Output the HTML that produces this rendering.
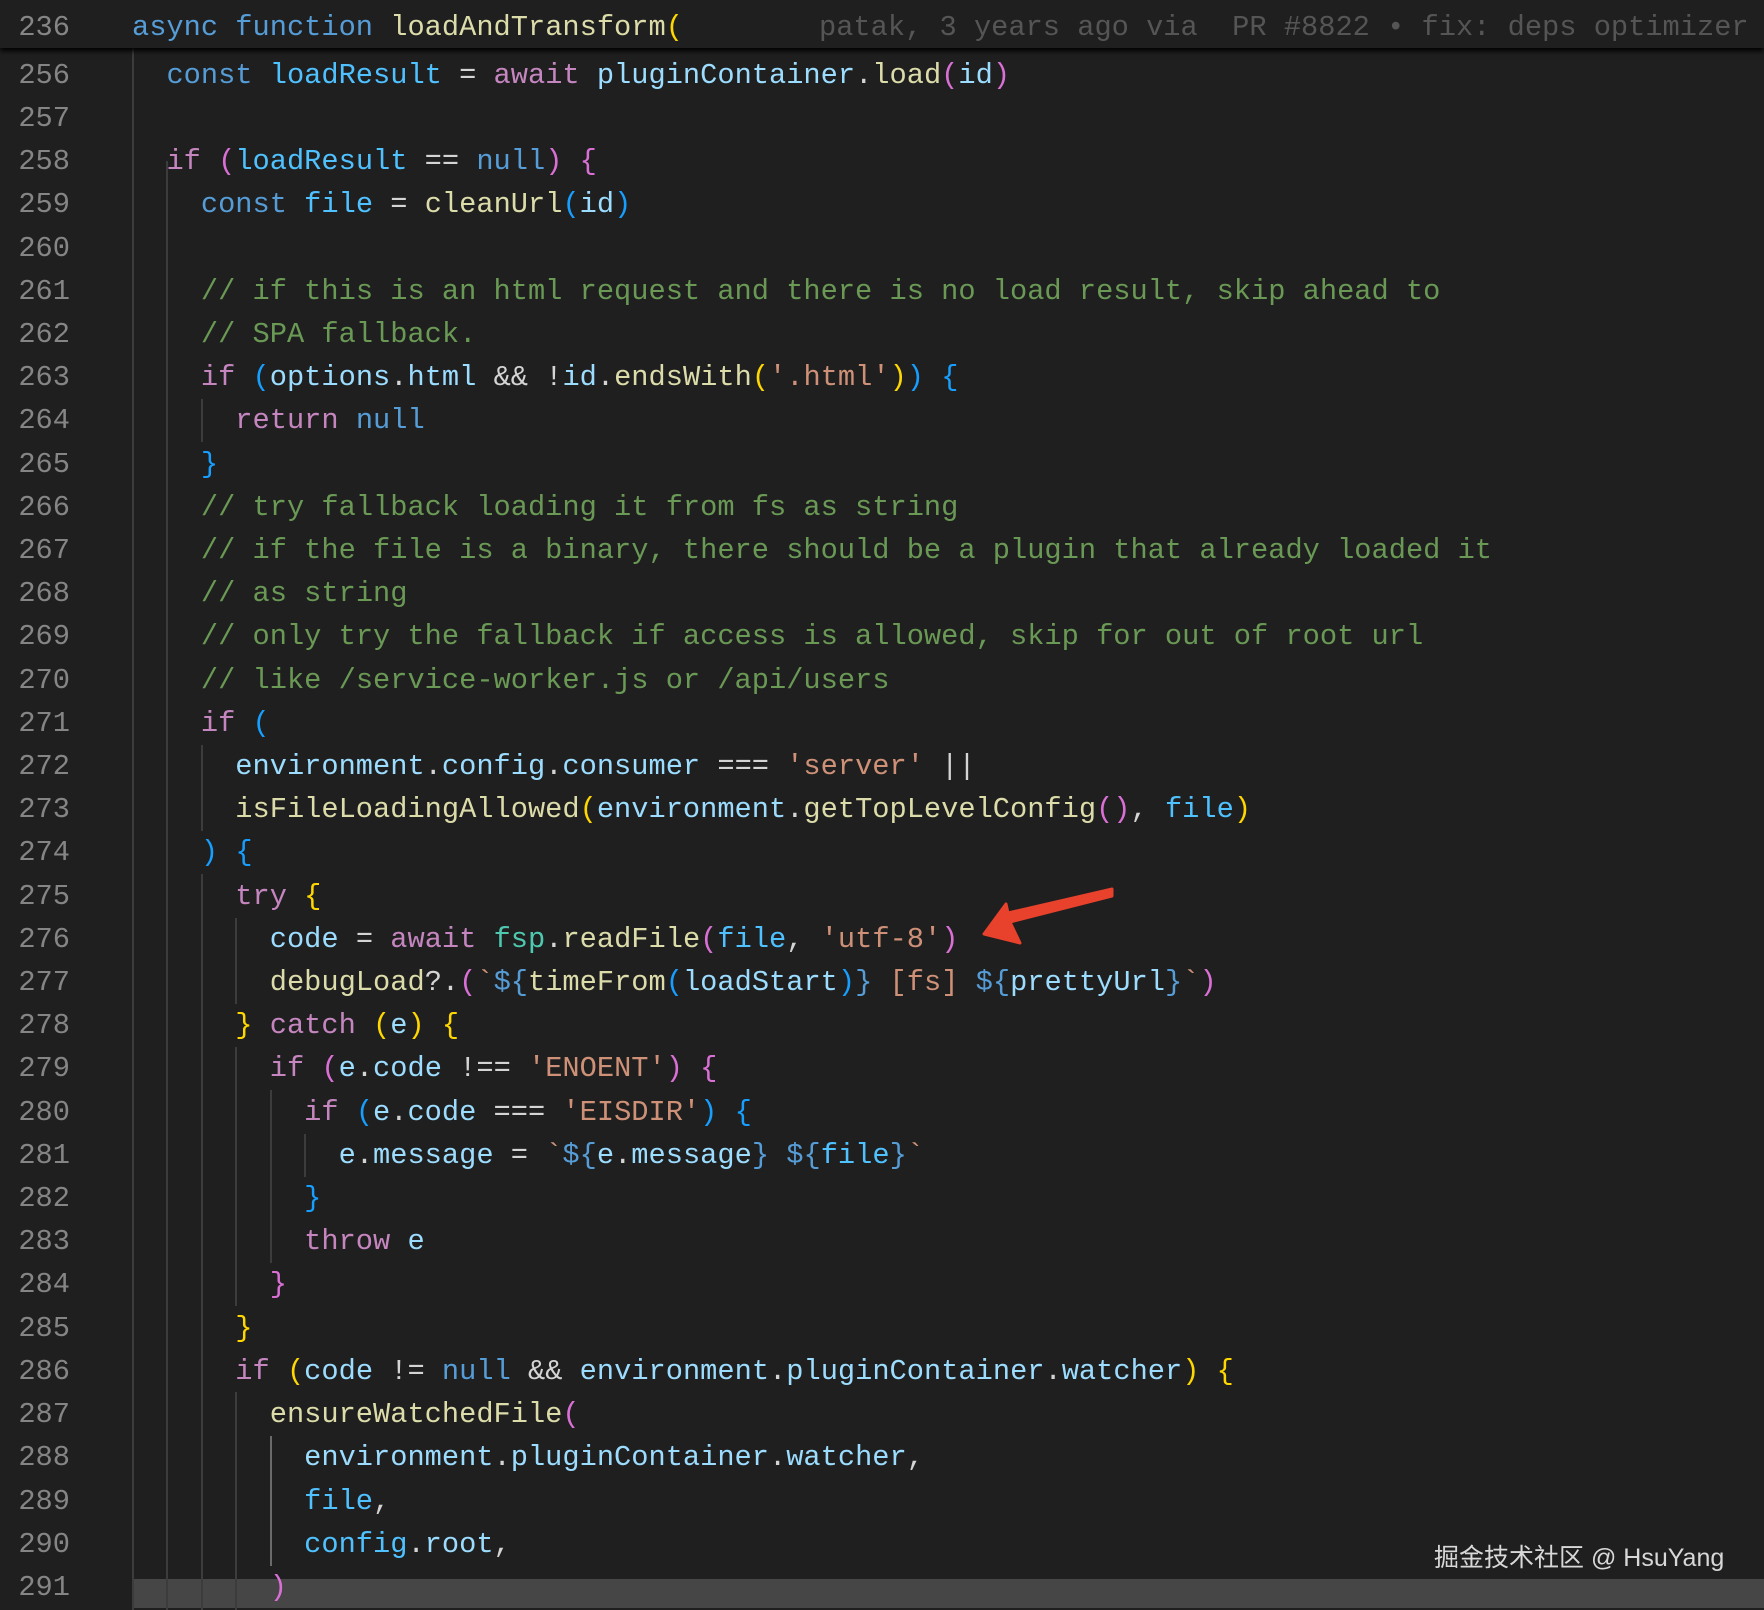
<!DOCTYPE html>
<html><head><meta charset="utf-8"><style>
html,body{margin:0;padding:0;background:#1f1f1f;width:1764px;height:1610px;overflow:hidden}
body{position:relative;font-family:"Liberation Mono",monospace;font-size:28.7px}
.hdr{position:absolute;left:0;top:0;width:1764px;height:48px;background:#1f1f1f;box-shadow:0 3px 5px #000;z-index:5}
.ln{position:absolute;left:0;width:70px;text-align:right;color:#858585;white-space:pre}
.code{position:absolute;left:132px;white-space:pre;color:#d4d4d4}
.row{height:43.2px;line-height:43.2px}
.g{position:absolute;width:2px;background:#3c3c3c}
.k{color:#569cd6}.c{color:#c586c0}.f{color:#dcdcaa}.v{color:#9cdcfe}.b{color:#4fc1ff}.s{color:#ce9178}.m{color:#6a9955}.t{color:#4ec9b0}
.y{color:#ffd700}.p{color:#da70d6}.u{color:#179fff}
</style></head><body>
<div class="hdr">
<div class="ln row" style="top:6px">236</div>
<div class="code row" style="top:6px"><span class="k">async</span> <span class="k">function</span> <span class="f">loadAndTransform</span><span class="y">(</span></div>
<div style="position:absolute;left:819px;top:6px;line-height:43.2px;color:#555;white-space:pre">patak, 3 years ago via  PR #8822 • fix: deps optimizer</div>
</div>
<div style="position:absolute;left:133px;top:1579px;width:1631px;height:29px;background:#464646"></div>
<div class="g" style="left:132px;top:48px;height:1562px"></div>
<div class="g" style="left:166px;top:161px;height:1449px"></div>
<div class="g" style="left:201px;top:399px;height:43px"></div>
<div class="g" style="left:201px;top:745px;height:86px"></div>
<div class="g" style="left:201px;top:874px;height:736px"></div>
<div class="g" style="left:235px;top:918px;height:86px"></div>
<div class="g" style="left:235px;top:1047px;height:259px"></div>
<div class="g" style="left:235px;top:1392px;height:218px"></div>
<div class="g" style="left:270px;top:1090px;height:173px"></div>
<div class="g" style="left:270px;top:1436px;height:130px;background:#6a6a6a"></div>
<div class="g" style="left:304px;top:1134px;height:43px"></div>
<div class="ln" style="top:53.8px;line-height:43.2px">256
257
258
259
260
261
262
263
264
265
266
267
268
269
270
271
272
273
274
275
276
277
278
279
280
281
282
283
284
285
286
287
288
289
290
291</div>
<div class="code" style="top:53.8px;line-height:43.2px">  <span class="k">const</span> <span class="b">loadResult</span> = <span class="c">await</span> <span class="v">pluginContainer</span>.<span class="f">load</span><span class="p">(</span><span class="v">id</span><span class="p">)</span>

  <span class="c">if</span> <span class="p">(</span><span class="b">loadResult</span> == <span class="k">null</span><span class="p">)</span> <span class="p">{</span>
    <span class="k">const</span> <span class="b">file</span> = <span class="f">cleanUrl</span><span class="u">(</span><span class="v">id</span><span class="u">)</span>

    <span class="m">// if this is an html request and there is no load result, skip ahead to</span>
    <span class="m">// SPA fallback.</span>
    <span class="c">if</span> <span class="u">(</span><span class="v">options</span>.<span class="v">html</span> &amp;&amp; !<span class="v">id</span>.<span class="f">endsWith</span><span class="y">(</span><span class="s">'.html'</span><span class="y">)</span><span class="u">)</span> <span class="u">{</span>
      <span class="c">return</span> <span class="k">null</span>
    <span class="u">}</span>
    <span class="m">// try fallback loading it from fs as string</span>
    <span class="m">// if the file is a binary, there should be a plugin that already loaded it</span>
    <span class="m">// as string</span>
    <span class="m">// only try the fallback if access is allowed, skip for out of root url</span>
    <span class="m">// like /service-worker.js or /api/users</span>
    <span class="c">if</span> <span class="u">(</span>
      <span class="v">environment</span>.<span class="v">config</span>.<span class="v">consumer</span> === <span class="s">'server'</span> ||
      <span class="f">isFileLoadingAllowed</span><span class="y">(</span><span class="v">environment</span>.<span class="f">getTopLevelConfig</span><span class="p">()</span>, <span class="b">file</span><span class="y">)</span>
    <span class="u">)</span> <span class="u">{</span>
      <span class="c">try</span> <span class="y">{</span>
        <span class="v">code</span> = <span class="c">await</span> <span class="t">fsp</span>.<span class="f">readFile</span><span class="p">(</span><span class="b">file</span>, <span class="s">'utf-8'</span><span class="p">)</span>
        <span class="f">debugLoad</span>?.<span class="p">(</span><span class="s">`</span><span class="k">${</span><span class="f">timeFrom</span><span class="u">(</span><span class="v">loadStart</span><span class="u">)</span><span class="k">}</span><span class="s"> [fs] </span><span class="k">${</span><span class="v">prettyUrl</span><span class="k">}</span><span class="s">`</span><span class="p">)</span>
      <span class="y">}</span> <span class="c">catch</span> <span class="y">(</span><span class="v">e</span><span class="y">)</span> <span class="y">{</span>
        <span class="c">if</span> <span class="p">(</span><span class="v">e</span>.<span class="v">code</span> !== <span class="s">'ENOENT'</span><span class="p">)</span> <span class="p">{</span>
          <span class="c">if</span> <span class="u">(</span><span class="v">e</span>.<span class="v">code</span> === <span class="s">'EISDIR'</span><span class="u">)</span> <span class="u">{</span>
            <span class="v">e</span>.<span class="v">message</span> = <span class="s">`</span><span class="k">${</span><span class="v">e</span>.<span class="v">message</span><span class="k">}</span><span class="s"> </span><span class="k">${</span><span class="b">file</span><span class="k">}</span><span class="s">`</span>
          <span class="u">}</span>
          <span class="c">throw</span> <span class="v">e</span>
        <span class="p">}</span>
      <span class="y">}</span>
      <span class="c">if</span> <span class="y">(</span><span class="v">code</span> != <span class="k">null</span> &amp;&amp; <span class="v">environment</span>.<span class="v">pluginContainer</span>.<span class="v">watcher</span><span class="y">)</span> <span class="y">{</span>
        <span class="f">ensureWatchedFile</span><span class="p">(</span>
          <span class="v">environment</span>.<span class="v">pluginContainer</span>.<span class="v">watcher</span>,
          <span class="b">file</span>,
          <span class="b">config</span>.<span class="v">root</span>,
        <span class="p">)</span></div>
<svg style="position:absolute;left:0;top:0" width="1764" height="1610">
<path d="M1112 889 L1112 896 L1010 922 L1020 943 L984 934 L1006 904 L1008 913 Z" fill="#e8412c" stroke="#e8412c" stroke-width="3" stroke-linejoin="round"/>
</svg>
<div style="position:absolute;left:1434px;top:1538px;font-family:'Liberation Sans','Noto Sans CJK SC',sans-serif;font-size:25px;color:#d8d8d8;white-space:pre">掘金技术社区 @ HsuYang</div>
</body></html>
